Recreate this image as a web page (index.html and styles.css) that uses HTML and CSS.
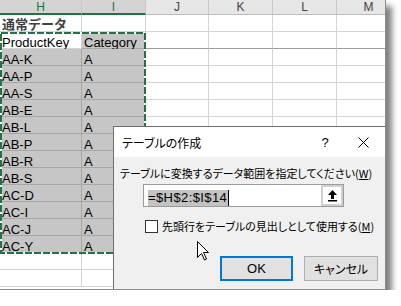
FILE: index.html
```html
<!DOCTYPE html>
<html>
<head>
  <meta charset="UTF-8">
  <title>テーブルの作成</title>
  <link rel="stylesheet" href="styles.css">
</head>
<body>
<div class='sheet'>
  <div class='grid'>
    <div class='hd sel'>H</div><div class='hd sel'>I</div><div class='hd'>J</div><div class='hd'>K</div><div class='hd'>L</div><div class='hd'>M</div>
    <div class='c title'>通常データ</div><div class='c'></div><div class='c'></div><div class='c'></div><div class='c'></div><div class='c'></div>
    <div class='c'>ProductKey</div><div class='c s'>Category</div><div class='c b'></div><div class='c b'></div><div class='c b'></div><div class='c b'></div>
    <div class='c s'>AA-K</div><div class='c s'>A</div><div class='c'></div><div class='c'></div><div class='c'></div><div class='c'></div>
    <div class='c s'>AA-P</div><div class='c s'>A</div><div class='c'></div><div class='c'></div><div class='c'></div><div class='c'></div>
    <div class='c s'>AA-S</div><div class='c s'>A</div><div class='c'></div><div class='c'></div><div class='c'></div><div class='c'></div>
    <div class='c s'>AB-E</div><div class='c s'>A</div><div class='c'></div><div class='c'></div><div class='c'></div><div class='c'></div>
    <div class='c s'>AB-L</div><div class='c s'>A</div><div class='c'></div><div class='c'></div><div class='c'></div><div class='c'></div>
    <div class='c s'>AB-P</div><div class='c s'>A</div><div class='c'></div><div class='c'></div><div class='c'></div><div class='c'></div>
    <div class='c s'>AB-R</div><div class='c s'>A</div><div class='c'></div><div class='c'></div><div class='c'></div><div class='c'></div>
    <div class='c s'>AB-S</div><div class='c s'>A</div><div class='c'></div><div class='c'></div><div class='c'></div><div class='c'></div>
    <div class='c s'>AC-D</div><div class='c s'>A</div><div class='c'></div><div class='c'></div><div class='c'></div><div class='c'></div>
    <div class='c s'>AC-I</div><div class='c s'>A</div><div class='c'></div><div class='c'></div><div class='c'></div><div class='c'></div>
    <div class='c s'>AC-J</div><div class='c s'>A</div><div class='c'></div><div class='c'></div><div class='c'></div><div class='c'></div>
    <div class='c s'>AC-Y</div><div class='c s'>A</div><div class='c'></div><div class='c'></div><div class='c'></div><div class='c'></div>
    <div class='c'></div><div class='c'></div><div class='c'></div><div class='c'></div><div class='c'></div><div class='c'></div>
    <div class='c'></div><div class='c'></div><div class='c'></div><div class='c'></div><div class='c'></div><div class='c'></div>
  </div>

  <!-- コピー範囲の点線 -->
  <svg class='ants' width='147' height='223'>
    <rect x='1' y='1' width='144' height='220' fill='none' stroke='#fff' stroke-width='2'/>
    <rect x='1' y='1' width='144' height='220' fill='none' stroke='#217346' stroke-width='2' stroke-dasharray='7 2'/>
  </svg>

  <div class='dialog'>
    <div class='dlg-title'>
      <span class='name'>テーブルの作成</span>
      <span class='help'>?</span>
      <span class='close'>
        <svg width='11' height='11'><path d='M0.5 0.5L10.5 10.5M10.5 0.5L0.5 10.5' stroke='#000' stroke-width='1'/></svg>
      </span>
    </div>
    <div class='dlg-body'>
      <div class='prompt'>テーブルに変換するデータ範囲を指定してください(<u>W</u>)</div>
      <div class='range'>
        <div class='range-text'><span class='picked'>=$H$2:$I$14</span></div>
        <div class='range-btn'>
          <svg width='9' height='12'><path d='M4.5 0L9 5H6V9H3V5H0Z' fill='#000'/><rect x='0' y='10' width='9' height='1.5' fill='#000'/></svg>
        </div>
      </div>
      <div class='check'>
        <span class='box'></span>
        <span>先頭行をテーブルの見出しとして使用する(<u>M</u>)</span>
      </div>
      <div class='buttons'>
        <div class='btn ok'>OK</div>
        <div class='btn'>キャンセル</div>
      </div>
    </div>
  </div>

  <svg class='cursor' width='13' height='20'>
    <path d='M0.5 0.5V16.5L4.5 12.5L7.5 19L9.5 18L6.5 11.5H11.5Z' fill='#fff' stroke='#000' stroke-width='1' stroke-linejoin='round'/>
  </svg>
</div>
</body>
</html>
```

FILE: styles.css
```css
body {
  margin: 0;
  background: #fff;
}

.sheet {
  position: relative;
  width: 385px;
  height: 289px;
  overflow: hidden;
  border-right: 1px solid #8c8c8c;
  border-bottom: 1px solid #8c8c8c;
  box-shadow: 6px 6px 6px rgba(0, 0, 0, 0.5);
  font-family: "Liberation Sans", "Noto Sans CJK JP", sans-serif;
}

.grid {
  display: grid;
  grid-template-columns: 82px 64px 63px 64px 64px 64px;
  grid-template-rows: 15px;
  grid-auto-rows: 17px;
}

.hd {
  box-sizing: border-box;
  background: #e6e6e6;
  border-right: 1px solid #c8c8c8;
  border-bottom: 1px solid #bcbcbc;
  font-size: 12px;
  line-height: 14px;
  text-align: center;
  color: #444;
}

.hd.sel {
  background: #d4d4d4;
  color: #217346;
  border-bottom: 2px solid #217346;
}

.c {
  box-sizing: border-box;
  border-right: 1px solid #d4d4d4;
  border-bottom: 1px solid #d4d4d4;
  padding: 2px 0 0 2px;
  font-size: 13px;
  line-height: 17px;
  white-space: nowrap;
  color: #000;
}

.c.s {
  background: #c6c6c6;
  border-color: #a6a6a6;
}

.c.b {
  border-bottom-color: #9c9c9c;
}

.c.title {
  padding-top: 0;
  font-family: "Noto Sans CJK JP", sans-serif;
  font-weight: 700;
  color: #404040;
}

.ants {
  position: absolute;
  left: 0;
  top: 32px;
}

.dialog {
  position: absolute;
  left: 113px;
  top: 126px;
  width: 272px;
  height: 180px;
  border: 1px solid #707070;
  background: #f0f0f0;
  font-family: "Noto Sans CJK JP", sans-serif;
  font-size: 12px;
  font-feature-settings: "palt";
  color: #000;
}

.dlg-title {
  display: flex;
  align-items: center;
  height: 30px;
  background: #fff;
}

.dlg-title .name {
  flex: 1;
  padding-left: 8px;
}

.dlg-title .help {
  width: 30px;
  text-align: center;
  font-family: "Liberation Sans", sans-serif;
  font-size: 13px;
}

.dlg-title .close {
  width: 46px;
  display: flex;
  justify-content: center;
}

.dlg-body {
  padding: 8px 0 0 6px;
}

.prompt {
  font-size: 11px;
  line-height: 16px;
  white-space: nowrap;
}

.range {
  display: flex;
  box-sizing: border-box;
  width: 201px;
  height: 23px;
  margin: 3px 0 0 23px;
  border: 1px solid #9b9b9b;
  background: #fff;
}

.range-text {
  flex: 1;
  padding: 3px 0 0 4px;
}

.picked {
  display: inline-block;
  height: 16px;
  line-height: 16px;
  padding-right: 1px;
  background: #c3c3c3;
  border-right: 1px solid #000;
  font-family: "Liberation Sans", sans-serif;
  font-size: 13px;
  letter-spacing: 0.4px;
}

.range-btn {
  box-sizing: border-box;
  width: 22px;
  border: 2px solid #d0d0d0;
  background: #fff;
  display: flex;
  align-items: center;
  justify-content: center;
}

.check {
  display: flex;
  align-items: center;
  gap: 4px;
  margin: 11px 0 0 25px;
  font-size: 11px;
  line-height: 16px;
  white-space: nowrap;
}

.check .box {
  flex: none;
  box-sizing: border-box;
  width: 13px;
  height: 13px;
  border: 1px solid #333;
  background: #fff;
}

.buttons {
  display: flex;
  gap: 11px;
  margin: 22px 0 0 100px;
}

.btn {
  box-sizing: border-box;
  width: 74px;
  height: 25px;
  border: 1px solid #adadad;
  background: #e1e1e1;
  text-align: center;
  line-height: 23px;
}

.btn.ok {
  width: 73px;
  border: 2px solid #0078d7;
  line-height: 21px;
  font-family: "Liberation Sans", sans-serif;
  font-size: 13px;
}

.cursor {
  position: absolute;
  left: 197px;
  top: 241px;
}
```
